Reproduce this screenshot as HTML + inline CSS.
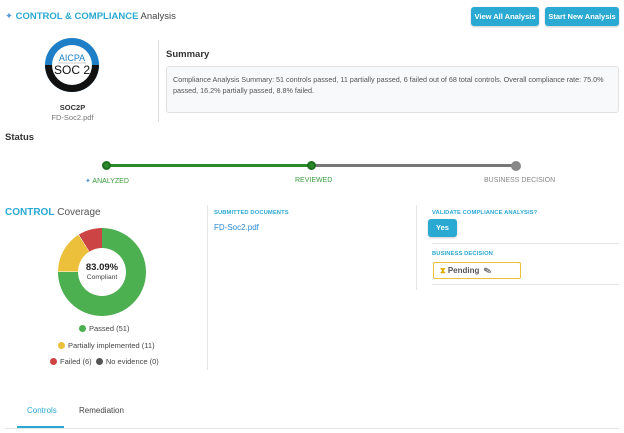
<!DOCTYPE html>
<html><head><meta charset="utf-8"><style>
*{margin:0;padding:0;box-sizing:border-box}
body{width:624px;height:433px;background:#fff;font-family:"Liberation Sans",sans-serif;position:relative;overflow:hidden;color:#333}
.a{position:absolute;white-space:nowrap}
.btn{position:absolute;background:#2aa9d2;color:#fff;font-size:7.5px;font-weight:bold;border-radius:3px;text-align:center;line-height:19px;box-shadow:0 1px 2px rgba(0,0,0,.2)}
.lbl{font-size:5.8px;font-weight:bold;color:#2aa9d2;letter-spacing:.1px}
.dot{display:inline-block;width:7px;height:7px;border-radius:50%;vertical-align:-1px;margin-right:3px}
.leg{font-size:7.5px;color:#444}
</style></head><body>
<div class="a" style="left:5px;top:11px;font-size:9.5px"><span style="color:#5b9bd5">✦</span> <b style="color:#2aa9d2">CONTROL &amp; COMPLIANCE</b> <span style="color:#444">Analysis</span></div>
<div class="btn" style="left:471px;top:7px;width:68px">View All Analysis</div>
<div class="btn" style="left:545px;top:7px;width:74px">Start New Analysis</div>

<svg class="a" style="left:42px;top:35px" width="60" height="60" viewBox="0 0 60 60">
<circle cx="30" cy="30" r="27" fill="#1e7fc6"/>
<path d="M3 30 A27 27 0 0 0 57 30 Z" fill="#111"/>
<circle cx="30" cy="30" r="20" fill="#fff"/>
<text x="30" y="26" font-size="9" fill="#1e7fc6" text-anchor="middle" font-family="Liberation Sans">AICPA</text>
<line x1="16" y1="28" x2="44" y2="28" stroke="#999" stroke-width=".5"/>
<text x="30" y="39" font-size="12" fill="#111" text-anchor="middle" font-family="Liberation Sans">SOC 2</text>
</svg>
<div class="a" style="left:0;width:145px;text-align:center;top:103px;font-size:7.5px;font-weight:bold;color:#333">SOC2P</div>
<div class="a" style="left:0;width:145px;text-align:center;top:113px;font-size:7.5px;color:#777">FD-Soc2.pdf</div>
<div class="a" style="left:158px;top:40px;width:1px;height:82px;background:#ddd"></div>
<div class="a" style="left:166px;top:49px;font-size:9.5px;font-weight:bold;color:#333">Summary</div>
<div class="a" style="left:166px;top:66px;width:453px;height:47px;background:#f8f9fa;border:1px solid #e2e2e2;border-radius:3px;padding:7px 6px;font-size:7.2px;line-height:11px;color:#555;white-space:normal">Compliance Analysis Summary: 51 controls passed, 11 partially passed, 6 failed out of 68 total controls. Overall compliance rate: 75.0% passed, 16.2% partially passed, 8.8% failed.</div>

<div class="a" style="left:5px;top:132px;font-size:9.5px;font-weight:bold;color:#333">Status</div>
<div class="a" style="left:106px;top:164px;width:205px;height:3px;background:#2a8a2a"></div>
<div class="a" style="left:311px;top:164px;width:205px;height:3px;background:#777"></div>
<div class="a" style="left:102px;top:161px;width:9px;height:9px;border-radius:50%;background:#2a8a2a;border:2px solid #1e6e1e"></div>
<div class="a" style="left:307px;top:161px;width:9px;height:9px;border-radius:50%;background:#2a8a2a;border:2px solid #1e6e1e"></div>
<div class="a" style="left:511px;top:161px;width:10px;height:10px;border-radius:50%;background:#888"></div>
<div class="a" style="left:85px;top:177px;font-size:7px;color:#3a9a3a"><span style="color:#5b9bd5">✦</span> ANALYZED</div>
<div class="a" style="left:295px;top:177px;font-size:7px;color:#3a9a3a">REVIEWED</div>
<div class="a" style="left:484px;top:177px;font-size:7px;color:#888">BUSINESS DECISION</div>

<div class="a" style="left:5px;top:207px;font-size:10px"><b style="color:#2aa9d2">CONTROL</b> <span style="color:#555">Coverage</span></div>
<div class="a" style="left:58px;top:228px;width:88px;height:88px;border-radius:50%;background:conic-gradient(#4caf50 0 270deg,#fff 270deg 270.7deg,#ecc03a 270.7deg 327.6deg,#fff 327.6deg 328.3deg,#cc4444 328.3deg 360deg)"></div>
<div class="a" style="left:78px;top:248px;width:48px;height:48px;border-radius:50%;background:#fff"></div>
<div class="a" style="left:58px;top:262px;width:88px;text-align:center;font-size:9.5px;font-weight:bold;color:#222">83.09%</div>
<div class="a" style="left:58px;top:274px;width:88px;text-align:center;font-size:6.8px;color:#444">Compliant</div>
<div class="a leg" style="left:79px;top:324px"><span class="dot" style="background:#4caf50"></span>Passed (51)</div>
<div class="a leg" style="left:58px;top:341px"><span class="dot" style="background:#ecc03a"></span>Partially implemented (11)</div>
<div class="a leg" style="left:50px;top:357px"><span class="dot" style="background:#cc4444"></span>Failed (6) &nbsp;<span class="dot" style="background:#555"></span>No evidence (0)</div>

<div class="a" style="left:207px;top:205px;width:1px;height:165px;background:#e5e5e5"></div>
<div class="a lbl" style="left:214px;top:210px">SUBMITTED DOCUMENTS</div>
<div class="a" style="left:214px;top:223px;font-size:8px;color:#2a8ad2">FD-Soc2.pdf</div>

<div class="a" style="left:416px;top:205px;width:1px;height:85px;background:#e5e5e5"></div>
<div class="a lbl" style="left:432px;top:210px">VALIDATE COMPLIANCE ANALYSIS?</div>
<div class="btn" style="left:428px;top:219px;width:29px;height:18px;line-height:18px">Yes</div>
<div class="a" style="left:432px;top:243px;width:187px;height:1px;background:#e5e5e5"></div>
<div class="a lbl" style="left:432px;top:251px">BUSINESS DECISION</div>
<div class="a" style="left:433px;top:262px;width:88px;height:17px;border:1px solid #ecc03a;border-radius:2px;font-size:8px;font-weight:bold;color:#555;line-height:15px;padding-left:6px"><span style="color:#e0a800">⧗</span> Pending &nbsp;<span style="color:#666">✎</span></div>
<div class="a" style="left:432px;top:284px;width:187px;height:1px;background:#e5e5e5"></div>

<div class="a" style="left:27px;top:406px;font-size:8px;color:#2aa9d2">Controls</div>
<div class="a" style="left:79px;top:406px;font-size:8px;color:#444">Remediation</div>
<div class="a" style="left:5px;top:428px;width:614px;height:1px;background:#e5e5e5"></div>
<div class="a" style="left:17px;top:426px;width:47px;height:2px;background:#2aa9d2"></div>
</body></html>
